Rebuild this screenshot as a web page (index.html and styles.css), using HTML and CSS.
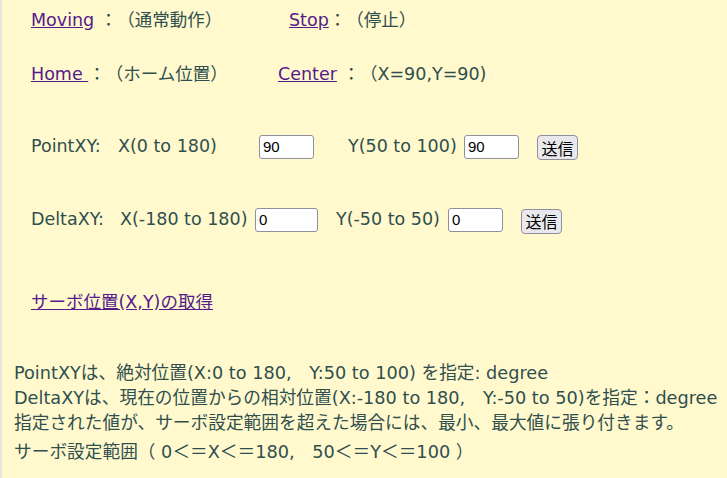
FILE: index.html
```html
<!DOCTYPE html>
<html lang="ja">
<head>
<meta charset="utf-8">
<title>Servo</title>
<link rel="stylesheet" href="styles.css">
</head>
<body>
<div class="page">
  <div class="row row1">
    <span class="cell c-moving"><a href="#">Moving</a> ：（通常動作）</span>
    <span class="cell"><a href="#">Stop</a>：（停止）</span>
  </div>
  <div class="row row2">
    <span class="cell c-home"><a href="#">Home </a>：（ホーム位置）</span>
    <span class="cell"><a href="#">Center</a> ：（X=90,Y=90)</span>
  </div>
  <form class="row form-row row3">
    <span class="lbl l-point">PointXY:</span>
    <span class="lbl l-px">X(0 to 180)</span>
    <input class="num num-s" type="text" value="90">
    <span class="lbl l-py">Y(50 to 100)</span>
    <input class="num num-s" type="text" value="90">
    <button class="send" type="button">送信</button>
  </form>
  <form class="row form-row row4">
    <span class="lbl l-delta">DeltaXY:</span>
    <span class="lbl l-dx">X(-180 to 180)</span>
    <input class="num num-l" type="text" value="0">
    <span class="lbl l-dy">Y(-50 to 50)</span>
    <input class="num num-s" type="text" value="0">
    <button class="send" type="button">送信</button>
  </form>
  <div class="row row5"><a href="#">サーボ位置(X,Y)の取得</a></div>
  <div class="notes">
    <div class="line">PointXYは、絶対位置(X:0 to 180,　Y:50 to 100) を指定: degree</div>
    <div class="line">DeltaXYは、現在の位置からの相対位置(X:-180 to 180,　Y:-50 to 50)を指定：degree</div>
    <div class="line">指定された値が、サーボ設定範囲を超えた場合には、最小、最大値に張り付きます。</div>
    <div class="line last">サーボ設定範囲（ 0＜＝X＜＝180,　50＜＝Y＜＝100 ）</div>
  </div>
</div>
</body>
</html>
```

FILE: styles.css
```css
html, body {
  margin: 0;
  padding: 0;
  background: #fff9cd;
}
body {
  border-left: 2px solid #e4e4dc;
  min-height: 478px;
  box-sizing: border-box;
  font-family: "DejaVu Sans", "Noto Sans CJK JP", sans-serif;
  font-size: 17.5px;
  color: #2f4f4f;
  text-spacing-trim: space-all;
}
a {
  color: #551a8b;
  text-decoration: underline;
}
.page {
  padding: 8px 0 0 29px;
}
.row {
  display: flex;
  align-items: center;
  height: 25px;
  line-height: 25px;
  white-space: pre;
  margin: 0;
}
.row2 { margin-top: 29px; }
.row3 { margin-top: 47px; }
.row4 { margin-top: 48px; }
.row5 { margin-top: 58px; }
.c-moving { width: 258px; }
.c-home { width: 247px; }
.lbl { display: inline-block; }
.l-point { width: 87px; }
.l-px { width: 141px; }
.l-py { margin-left: 34px; width: 116px; }
.l-delta { width: 89px; }
.l-dx { width: 135px; }
.l-dy { margin-left: 18px; width: 112px; }
.num {
  box-sizing: border-box;
  height: 24px;
  margin: 0;
  padding: 1px 3px;
  border: 1px solid #8f8f9d;
  border-radius: 3px;
  background: #fff;
  font-family: "Liberation Sans", sans-serif;
  font-size: 15px;
  color: #000;
}
.num-s { width: 55px; }
.num-l { width: 63px; }
.send {
  box-sizing: border-box;
  width: 41px;
  height: 25px;
  margin: 0 0 0 18px;
  padding: 0;
  border: 1px solid #8f8f9d;
  border-radius: 4px;
  background: #e9e9ed;
  font-family: "Noto Sans CJK JP", sans-serif;
  font-size: 16px;
  line-height: 22px;
  color: #000;
}
.row3 .send { margin-top: 2px; }
.row4 .send { margin-top: 3px; }
.notes {
  margin: 46px 0 0 -17px;
  font-size: 17.7px;
}
.line {
  height: 25px;
  line-height: 25px;
  white-space: nowrap;
}
.line.last { margin-top: 4px; }
```
